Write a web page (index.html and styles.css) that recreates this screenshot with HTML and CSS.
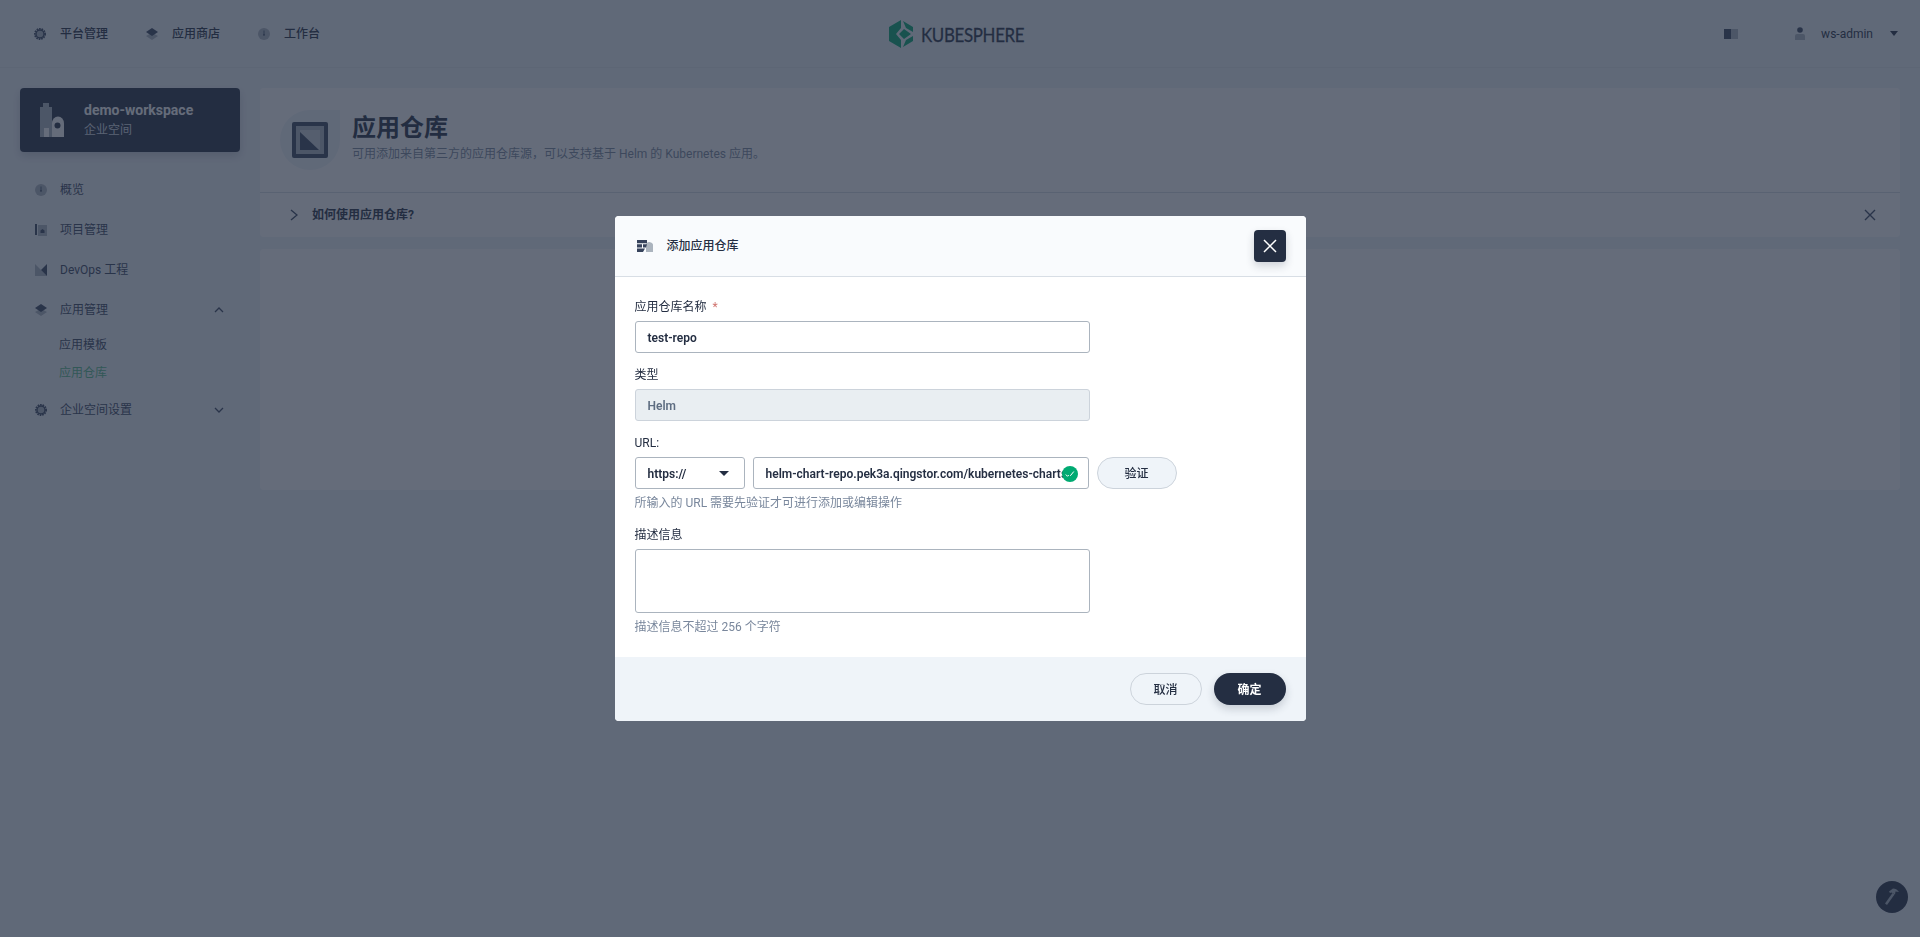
FILE: index.html
```html
<!DOCTYPE html>
<html lang="zh-CN">

<head>
    <meta charset="UTF-8">
    <title>应用仓库 - KubeSphere</title>
    <link rel="stylesheet" href="styles.css">
</head>

<body>
    <svg class="defs" width="0" height="0">
        <symbol id="i-gear" viewBox="0 0 12 12">
            <circle cx="6" cy="6" r="4" fill="#abb4be" stroke="#36435c" stroke-width="1.4" />
            <circle cx="6" cy="6" r="5.1" fill="none" stroke="#36435c" stroke-width="1.8" stroke-dasharray="1.6 0.9" />
        </symbol>
        <symbol id="i-layers" viewBox="0 0 12 12">
            <path d="M6 4.8L12 8L6 12L0 8Z" fill="#abb4be" />
            <path d="M6 0L12 4L6 8L0 4Z" fill="#36435c" />
        </symbol>
        <symbol id="i-dash" viewBox="0 0 12 12">
            <circle cx="6" cy="6" r="6" fill="#abb4be" />
            <path d="M5.6 2.500h.8v3.500l.6.800a1 1 0 1 1-2 0l.6-.8z" fill="#36435c" />
        </symbol>
    </svg>

    <header class="topbar">
        <nav class="topnav">
            <a class="topnav-item"><svg class="icon"><use href="#i-gear" /></svg>平台管理</a>
            <a class="topnav-item"><svg class="icon"><use href="#i-layers" /></svg>应用商店</a>
            <a class="topnav-item"><svg class="icon"><use href="#i-dash" /></svg>工作台</a>
        </nav>
        <div class="logo">
            <svg width="24" height="28" viewBox="0 0 24 28">
                <path d="M12 0V8L7 14L12 20V28L0 21V7Z" fill="#00a971" />
                <path d="M14 1L24 7V12L17 8ZM24 16V21L14 27L17 20ZM10 14L15 9L22 14L15 19Z" fill="#00a971" />
            </svg>
            <span class="logo-text">KUBESPHERE</span>
        </div>
        <div class="toptools">
            <svg class="theme-icon" width="14" height="10" viewBox="0 0 14 10">
                <rect width="7" height="10" fill="#36435c" />
                <rect x="7" width="7" height="10" fill="#abb4be" />
            </svg>
            <svg class="user-icon" width="10" height="13" viewBox="0 0 10 13">
                <circle cx="5" cy="3" r="2.8" fill="#36435c" />
                <path d="M0 13V9a2 2 0 0 1 2-2h6a2 2 0 0 1 2 2v4z" fill="#abb4be" />
            </svg>
            <span class="username">ws-admin</span>
            <span class="caret"></span>
        </div>
    </header>

    <div class="layout">
        <aside class="sidebar">
            <div class="ws-card">
                <svg width="24" height="34" viewBox="0 0 24 34">
                    <path d="M3 0h6v4h3v30H9v-9H4v9H0V4h3z" fill="#abb4be" />
                    <path d="M4 25h5v9H4z" fill="#fff" />
                    <path d="M12 22a6 6 0 0 1 12 0v12H12z" fill="#fff" transform="translate(0 -5) scale(1 1.15)" />
                    <circle cx="17.500" cy="22.500" r="3" fill="#242e42" />
                </svg>
                <div>
                    <div class="ws-name">demo-workspace</div>
                    <div class="ws-type">企业空间</div>
                </div>
            </div>

            <ul class="menu">
                <li class="menu-item"><svg class="icon"><use href="#i-dash" /></svg>概览</li>
                <li class="menu-item">
                    <svg class="icon" viewBox="0 0 12 12">
                        <rect width="2" height="11" fill="#36435c" />
                        <rect x="3" y="1" width="9" height="11" fill="#abb4be" />
                        <path d="M5.500 9V6.500L7.500 5L9.500 6.500V9z" fill="#36435c" />
                    </svg>
                    项目管理
                </li>
                <li class="menu-item">
                    <svg class="icon" viewBox="0 0 12 12">
                        <path d="M0 0L6 6L12 12H0Z" fill="#abb4be" />
                        <path d="M12 0V12L6 6Z" fill="#36435c" />
                    </svg>
                    DevOps 工程
                </li>
                <li class="menu-item">
                    <svg class="icon"><use href="#i-layers" /></svg>应用管理
                    <svg class="chev" width="10" height="6" viewBox="0 0 10 6"><path d="M1 5L5 1L9 5" /></svg>
                </li>
                <li class="sub-list">
                    <div class="sub-item">应用模板</div>
                    <div class="sub-item sub-active">应用仓库</div>
                </li>
                <li class="menu-item">
                    <svg class="icon"><use href="#i-gear" /></svg>企业空间设置
                    <svg class="chev" width="10" height="6" viewBox="0 0 10 6"><path d="M1 1L5 5L9 1" /></svg>
                </li>
            </ul>
        </aside>

        <main class="main">
            <section class="card">
                <div class="page-head">
                    <div class="page-icon">
                        <svg width="36" height="36" viewBox="0 0 36 36">
                            <rect width="36" height="36" rx="2" fill="#36435c" />
                            <rect x="4" y="4" width="28" height="28" fill="#abb4be" />
                            <rect x="8" y="8" width="20" height="20" fill="#c9d0d7" />
                            <path d="M8 10L27 28H8Z" fill="#36435c" />
                        </svg>
                    </div>
                    <div>
                        <h1 class="page-title">应用仓库</h1>
                        <p class="page-desc">可用添加来自第三方的应用仓库源，可以支持基于 Helm 的 Kubernetes 应用。</p>
                    </div>
                </div>
                <div class="tip-bar">
                    <svg class="tip-chev" width="8" height="12" viewBox="0 0 8 12"><path d="M1 1L7 6L1 11" /></svg>
                    <span class="tip-text">如何使用应用仓库?</span>
                    <svg class="tip-close" width="12" height="12" viewBox="0 0 12 12"><path d="M1 1L11 11M11 1L1 11" /></svg>
                </div>
            </section>
            <section class="card card-empty"></section>
        </main>
    </div>

    <button class="tool-btn">
        <svg width="16" height="18" viewBox="0 0 16 18">
            <path d="M8.500 5L10.500 6.500L3 17L1 15.500Z" fill="#abb4be" />
            <path d="M5 3.500L9 0.500C11 0.500 13.500 1.500 15 4L11.500 3.500L11 6.500L7.500 4.500L6 5Z" fill="#abb4be" />
        </svg>
    </button>

    <div class="overlay">
        <div class="modal">
            <div class="modal-head">
                <svg width="16" height="12" viewBox="0 0 16 12">
                    <path d="M9 12V5a3.500 3.500 0 0 1 7 1.500V12z" fill="#abb4be" />
                    <path d="M0 0h10v3.200H0zM0 4.200h5v3.200H0zM6 4.200h4l-1 3.200H6zM0 8.400h8L6 12H0z" fill="#36435c" />
                </svg>
                <span class="modal-title">添加应用仓库</span>
                <button class="modal-close">
                    <svg width="14" height="14" viewBox="0 0 14 14"><path d="M1 1L13 13M13 1L1 13" /></svg>
                </button>
            </div>

            <form class="modal-body">
                <div class="field">
                    <div class="label">应用仓库名称<span class="required">*</span></div>
                    <div class="input">test-repo</div>
                </div>
                <div class="field">
                    <div class="label">类型</div>
                    <div class="input input-disabled">Helm</div>
                </div>
                <div class="field field-url">
                    <div class="label">URL:</div>
                    <div class="url-row">
                        <div class="input select">https://<span class="select-caret"></span></div>
                        <div class="input url-input">
                            <span class="url-text">helm-chart-repo.pek3a.qingstor.com/kubernetes-charts</span>
                            <svg class="url-ok" width="16" height="16" viewBox="0 0 16 16">
                                <circle cx="8" cy="8" r="8" fill="#00aa72" />
                                <path d="M3.800 8.500L5.500 10.300L6.800 9M8.300 9.800L11.800 5.500" fill="none" stroke="#fff" stroke-width="1" />
                            </svg>
                        </div>
                        <button type="button" class="btn btn-verify">验证</button>
                    </div>
                    <div class="hint">所输入的 URL 需要先验证才可进行添加或编辑操作</div>
                </div>
                <div class="field field-last">
                    <div class="label">描述信息</div>
                    <textarea class="textarea"></textarea>
                    <div class="hint">描述信息不超过 256 个字符</div>
                </div>
            </form>

            <div class="modal-foot">
                <button class="btn btn-cancel">取消</button>
                <button class="btn btn-primary">确定</button>
            </div>
        </div>
    </div>
</body>

</html>
```

FILE: styles.css
```css
* {
    box-sizing: border-box;
}

html, body {
    height: 100%;
}

body {
    margin: 0;
    background-color: #eff4f9;
    color: #242e42;
    font-family: Roboto, "Noto Sans CJK SC", sans-serif;
    font-size: 12px;
    line-height: 20px;
    overflow: hidden;
}

button {
    font-family: inherit;
}

.defs {
    position: absolute;
}

.icon {
    flex: none;
    width: 12px;
    height: 12px;
}

/* top bar */
.topbar {
    position: relative;
    display: flex;
    align-items: center;
    justify-content: space-between;
    height: 68px;
    padding: 0 22px 0 34px;
    background-color: #eff4f9;
    border-bottom: 1px solid #e3e9ef;
}

.topnav {
    display: flex;
    gap: 38px;
    font-weight: 500;
}

.topnav-item {
    display: flex;
    align-items: center;
    gap: 14px;
}

.logo {
    position: absolute;
    top: 20px;
    left: 889px;
    display: flex;
    align-items: center;
    gap: 8px;
}

.logo-text {
    font-family: Lato, sans-serif;
    font-size: 20px;
    line-height: 28px;
    letter-spacing: -0.4px;
    color: #242e42;
    -webkit-text-stroke: 0.3px #242e42;
    transform: scaleX(0.845);
    transform-origin: left center;
}

.toptools {
    display: flex;
    align-items: center;
}

.theme-icon {
    margin-right: 57px;
}

.user-icon {
    margin-right: 16px;
}

.caret {
    width: 0;
    height: 0;
    margin-left: 17px;
    border-top: 5px solid #242e42;
    border-left: 4px solid transparent;
    border-right: 4px solid transparent;
}

/* page layout */
.layout {
    display: flex;
    gap: 20px;
    padding: 20px 20px 0;
}

.sidebar {
    flex: none;
    width: 220px;
}

.ws-card {
    display: flex;
    align-items: center;
    gap: 20px;
    height: 64px;
    padding-left: 20px;
    background-color: #242e42;
    border-radius: 4px;
    box-shadow: 0 4px 8px 0 rgba(36, 46, 66, 0.2);
    color: #fff;
}

.ws-name {
    font-size: 14px;
    font-weight: 700;
    line-height: 20px;
}

.ws-type {
    color: #d8dee5;
    line-height: 20px;
}

.menu {
    margin: 18px 0 0;
    padding: 0;
    list-style: none;
    color: #36435c;
}

.menu-item {
    display: flex;
    align-items: center;
    gap: 13px;
    height: 40px;
    padding: 0 16px 0 15px;
}

.chev {
    margin-left: auto;
    fill: none;
    stroke: #36435c;
    stroke-width: 1.3;
}

.sub-list {
    margin: 1px 0 3px;
}

.sub-item {
    height: 28px;
    padding-left: 39px;
    line-height: 28px;
}

.sub-active {
    color: #55bc8a;
}

.main {
    flex: 1;
    min-width: 0;
}

.card {
    background-color: #fff;
    border-radius: 4px;
}

.card-empty {
    height: 241px;
    margin-top: 12px;
}

.page-head {
    display: flex;
    gap: 12px;
    height: 105px;
    padding: 22px 20px 0;
    border-bottom: 1px solid #d8dee5;
}

.page-icon {
    display: flex;
    align-items: center;
    justify-content: center;
    width: 60px;
    height: 60px;
    background-color: #eff4f9;
    border-radius: 50% 0 50% 50%;
}

.page-title {
    margin: 2px 0 0;
    font-size: 24px;
    font-weight: 700;
    line-height: 32px;
}

.page-desc {
    margin: 2px 0 0;
    color: #79879c;
    line-height: 16px;
}

.tip-bar {
    display: flex;
    align-items: center;
    height: 44px;
    padding: 0 24px 0 30px;
}

.tip-chev {
    fill: none;
    stroke: #36435c;
    stroke-width: 1.4;
}

.tip-text {
    margin-left: 14px;
    font-weight: 700;
}

.tip-close {
    margin-left: auto;
    fill: none;
    stroke: #36435c;
    stroke-width: 1.4;
}

.tool-btn {
    position: absolute;
    right: 12px;
    bottom: 24px;
    display: flex;
    align-items: center;
    justify-content: center;
    width: 32px;
    height: 32px;
    padding: 0;
    background-color: #242e42;
    border: 0;
    border-radius: 50%;
}

/* modal */
.overlay {
    position: fixed;
    top: 0;
    right: 0;
    bottom: 0;
    left: 0;
    display: flex;
    justify-content: center;
    align-items: flex-start;
    padding-top: 216px;
    background-color: rgba(35, 45, 65, 0.7);
}

.modal {
    width: 691px;
    background-color: #fff;
    border-radius: 4px;
    overflow: hidden;
}

.modal-head {
    display: flex;
    align-items: center;
    height: 61px;
    padding: 0 20px 0 22px;
    background-color: #f9fbfd;
    border-bottom: 1px solid #d8dee5;
}

.modal-title {
    margin-left: 14px;
    font-weight: 500;
}

.modal-close {
    display: flex;
    align-items: center;
    justify-content: center;
    width: 32px;
    height: 32px;
    margin-left: auto;
    padding: 0;
    background-color: #242e42;
    border: 0;
    border-radius: 4px;
    box-shadow: 0 4px 8px 0 rgba(36, 46, 66, 0.2);
}

.modal-close svg {
    fill: none;
    stroke: #fff;
    stroke-width: 1.5;
}

.modal-body {
    padding: 19px 20px 22px;
}

.field {
    margin-bottom: 11px;
}

.field-url {
    margin-bottom: 13px;
}

.field-last {
    margin-bottom: 0;
}

.label {
    margin-bottom: 4px;
    padding-top: 1px;
    line-height: 20px;
}

.required {
    margin-left: 6px;
    color: #d0736e;
}

.input {
    display: flex;
    align-items: center;
    width: 455px;
    height: 32px;
    padding: 1px 12px 0;
    background-color: #fff;
    border: 1px solid #abb4be;
    border-radius: 3px;
    font-weight: 600;
}

.input-disabled {
    background-color: #e9eef2;
    border-color: #ccd3db;
    color: #5e6d82;
}

.url-row {
    display: flex;
    gap: 8px;
}

.select {
    justify-content: space-between;
    flex: none;
    width: 110px;
    padding-right: 15px;
}

.select-caret {
    width: 0;
    height: 0;
    border-top: 5px solid #242e42;
    border-left: 5px solid transparent;
    border-right: 5px solid transparent;
}

.url-input {
    position: relative;
    flex: none;
    width: 336px;
}

.url-text {
    overflow: hidden;
    white-space: nowrap;
    width: 100%;
}

.url-ok {
    position: absolute;
    top: 8px;
    right: 10px;
}

.hint {
    margin-top: 6px;
    color: #79879c;
    line-height: 16px;
}

.textarea {
    display: block;
    width: 455px;
    height: 64px;
    background-color: #fff;
    border: 1px solid #abb4be;
    border-radius: 3px;
    resize: none;
}

.btn {
    width: 72px;
    height: 32px;
    padding: 0 0 2px;
    font-size: 12px;
    font-weight: 500;
    border-radius: 16px;
    color: #242e42;
}

.btn-verify {
    width: 80px;
    margin-left: 0;
    background-color: #eff4f9;
    border: 1px solid #ccd3db;
}

.btn-cancel {
    background-color: #eff4f9;
    border: 1px solid #ccd3db;
}

.btn-primary {
    background-color: #242e42;
    border: 0;
    color: #fff;
    font-weight: 700;
    box-shadow: 0 4px 8px 0 rgba(36, 46, 66, 0.2);
}

.modal-foot {
    display: flex;
    justify-content: flex-end;
    gap: 12px;
    height: 64px;
    padding: 16px 20px;
    background-color: #eff4f9;
}
```
